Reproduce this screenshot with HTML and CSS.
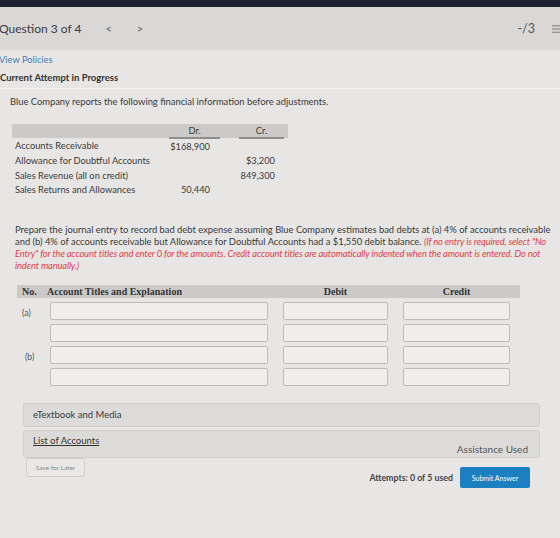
FILE: index.html
```html
<!DOCTYPE html>
<html lang="en">
<head>
    <meta charset="UTF-8">
    <title>Question 3 of 4</title>
<link rel="stylesheet" href="styles.css">
</head>
<body>
    <div class="topbar"></div>

    <div class="qheader">
        <span class="qtitle">Question 3 of 4</span>
        <span class="nav"><span>&lt;</span><span>&gt;</span></span>
        <span class="score">-/3</span>
        <svg class="menu" width="10" height="10" viewBox="0 0 10 10">
            <rect x="0" y="1" width="10" height="1.4" fill="#9a9896"/>
            <rect x="0" y="4.3" width="10" height="1.4" fill="#9a9896"/>
            <rect x="0" y="7.6" width="10" height="1.4" fill="#9a9896"/>
        </svg>
    </div>

    <div class="attempt">
        <a class="policies" href="#">View Policies</a>
        <div class="progress">Current Attempt in Progress</div>
    </div>

    <div class="question">
        <p class="intro">Blue Company reports the following financial information before adjustments.</p>

        <table class="fin">
            <tr class="fin-head">
                <th class="lbl"></th>
                <th class="col">Dr.</th>
                <th class="sp"></th>
                <th class="col cr">Cr.</th>
                <th class="end"></th>
            </tr>
            <tr><td class="lbl">Accounts Receivable</td><td class="amt">$168,900</td><td></td><td class="amt cr"></td><td></td></tr>
            <tr><td class="lbl">Allowance for Doubtful Accounts</td><td class="amt"></td><td></td><td class="amt cr">$3,200</td><td></td></tr>
            <tr><td class="lbl">Sales Revenue (all on credit)</td><td class="amt"></td><td></td><td class="amt cr">849,300</td><td></td></tr>
            <tr><td class="lbl">Sales Returns and Allowances</td><td class="amt">50,440</td><td></td><td class="amt cr"></td><td></td></tr>
        </table>

        <p class="task">Prepare the journal entry to record bad debt expense assuming Blue Company estimates bad debts at (a) 4% of accounts receivable and (b) 4% of accounts receivable but Allowance for Doubtful Accounts had a $1,550 debit balance. <em>(If no entry is required, select "No Entry" for the account titles and enter 0 for the amounts. Credit account titles are automatically indented when the amount is entered. Do not indent manually.)</em></p>

        <div class="journal">
            <div class="jhead">
                <span class="no">No.</span>
                <span class="acct">Account Titles and Explanation</span>
                <span class="mid">Debit</span>
                <span class="mid">Credit</span>
            </div>
            <div class="jrow">
                <span class="tag">(a)</span>
                <input type="text"><input type="text"><input type="text">
            </div>
            <div class="jrow">
                <span class="tag"></span>
                <input type="text"><input type="text"><input type="text">
            </div>
            <div class="jrow">
                <span class="tag b">(b)</span>
                <input type="text"><input type="text"><input type="text">
            </div>
            <div class="jrow">
                <span class="tag"></span>
                <input type="text"><input type="text"><input type="text">
            </div>
        </div>

        <div class="bar media">eTextbook and Media</div>
        <div class="bar accounts">
            <a href="#">List of Accounts</a>
            <span class="assist">Assistance Used</span>
        </div>

        <div class="footer">
            <button class="save">Save for Later</button>
            <div class="submit-group">
                <span class="attempts">Attempts: 0 of 5 used</span>
                <button class="submit">Submit Answer</button>
            </div>
        </div>
    </div>
</body>
</html>
```

FILE: styles.css
```css
body {
margin: 0;
width: 560px;
height: 538px;
overflow: hidden;
background-color: #e7e6e4;
font-family: Lato, "Open Sans", sans-serif;
color: #3a3a3a;
}

.topbar {
height: 7px;
background-color: #1d2231;
}

.qheader {
height: 43px;
display: flex;
align-items: center;
background-color: #dad8d7;
}
.qtitle {
font-size: 12px;
margin-left: -1px;
color: #3c3c3c;
}
.nav {
display: flex;
gap: 25px;
margin-left: 24px;
font-size: 11px;
color: #666;
}
.score {
margin-left: auto;
font-size: 12.5px;
color: #555;
margin-right: 17px;
}
.menu {
margin-right: -2px;
}

.attempt {
padding: 4px 0 4px 0;
border-bottom: 1px solid #f2f1ef;
}
.policies {
display: block;
margin-left: -1px;
font-size: 9.3px;
line-height: 12px;
color: #4c7db0;
text-decoration: none;
}
.progress {
margin-top: 6px;
font-size: 9.5px;
line-height: 12px;
font-weight: bold;
color: #333;
}

.question {
padding: 0 8px 0 10px;
}
.intro {
margin: 7px 0 0 0;
font-size: 9.4px;
line-height: 12px;
}

/* debit / credit balances */
.fin {
margin: 16px 0 0 2px;
border-collapse: collapse;
font-size: 9.3px;
}
.fin td, .fin th {
padding: 0;
height: 14.5px;
}
.fin-head th {
background-color: #cbcac8;
font-weight: normal;
height: 13px;
}
.fin .lbl {
width: 154px;
padding-left: 3px;
text-align: left;
}
.fin .col {
width: 51px;
border-bottom: 2px solid #8f8e8c;
text-align: center;
}
.fin .col.cr {
width: 45px;
}
.fin .sp {
width: 19px;
}
.fin .end {
width: 4px;
}
.fin .amt {
text-align: right;
padding-right: 10px;
}
.fin .amt.cr {
padding-right: 9px;
}

.task {
margin: 27px 0 0 5px;
width: 537px;
font-size: 9.4px;
line-height: 12px;
}
.task em {
color: #d9434b;
letter-spacing: -0.16px;
}

/* journal entry grid */
.journal {
margin: 13px 0 0 7px;
width: 503px;
}
.jhead, .jrow {
display: grid;
grid-template-columns: 18px 218px 105px 107px;
column-gap: 15px;
padding-right: 10px;
}
.jhead {
height: 13px;
align-items: center;
background-color: #cbcac8;
font-family: "Liberation Serif", serif;
font-weight: bold;
font-size: 10px;
color: #333;
}
.jhead .no {
padding-left: 5px;
}
.jhead .acct {
margin-left: -3px;
}
.jhead .mid {
text-align: center;
}
.jrow {
margin-top: 4px;
}
.jrow input {
height: 18px;
box-sizing: border-box;
margin: 0;
border: 1px solid #bdbcba;
border-radius: 2px;
background-color: #efeeec;
}
.tag {
padding: 5px 0 0 5px;
font-size: 8.8px;
color: #555;
white-space: nowrap;
}
.tag.b {
padding-left: 8px;
}

.bar {
margin-left: 13px;
width: 517px;
box-sizing: border-box;
border: 1px solid #d0cfcd;
border-radius: 3px;
background-color: #dcdbd9;
font-size: 9.5px;
}
.media {
margin-top: 17px;
height: 24px;
padding: 4px 9px;
line-height: 14px;
}
.accounts {
margin-top: 3px;
height: 28px;
padding: 3px 11px 0 9px;
display: flex;
justify-content: space-between;
}
.accounts a {
line-height: 14px;
color: #333;
}
.assist {
align-self: flex-end;
line-height: 16px;
font-size: 10px;
color: #555;
}

.footer {
display: flex;
align-items: flex-start;
margin-left: 16px;
width: 504px;
}
.save {
width: 59px;
height: 19px;
padding: 0;
border: 1px solid #cfcecc;
border-radius: 3px;
background-color: #e9e8e6;
font-family: Lato, sans-serif;
font-size: 6.5px;
color: #888;
}
.submit-group {
margin-left: auto;
margin-top: 9px;
display: flex;
align-items: center;
gap: 7px;
}
.attempts {
font-size: 8.8px;
font-weight: bold;
color: #444;
}
.submit {
width: 70px;
height: 21px;
padding: 0;
border: none;
border-radius: 2px;
background-color: #1b7fc0;
font-family: Lato, sans-serif;
font-size: 7px;
color: white;
}
```
